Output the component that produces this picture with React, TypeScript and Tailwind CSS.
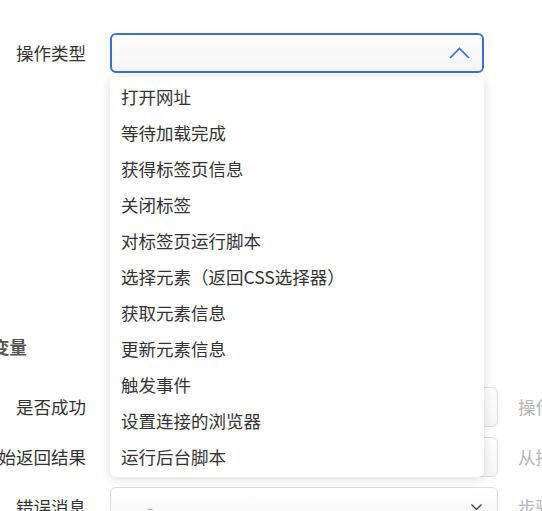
import React from 'react';

const options = [
  '打开网址',
  '等待加载完成',
  '获得标签页信息',
  '关闭标签',
  '对标签页运行脚本',
  '选择元素（返回CSS选择器）',
  '获取元素信息',
  '更新元素信息',
  '触发事件',
  '设置连接的浏览器',
  '运行后台脚本',
];

const Label: React.FC<{ text: string }> = ({ text }) => (
  <div className="w-[86px] shrink-0 flex justify-end whitespace-nowrap text-[17.5px] text-[#333]">{text}</div>
);

const App: React.FC = () => {
  return (
    <div
      className="relative w-[542px] h-[511px] overflow-hidden bg-white"
      style={{ fontFamily: '"Noto Sans CJK SC", "Noto Sans", sans-serif' }}
    >
      {/* 操作类型 */}
      <div className="mt-[33px] flex items-center gap-[24px]">
        <Label text="操作类型" />
        <div className="relative">
          <div className="w-[374px] h-[40px] rounded-[6px] border-2 border-[#3a6fd8] bg-gradient-to-b from-white to-[#f4f4f4] flex items-center justify-end pr-[12px]">
            <svg width="21" height="12" viewBox="0 0 21 12" fill="none">
              <path d="M1 11 L10.5 1.5 L20 11" stroke="#3a6fd8" strokeWidth="1.7" />
            </svg>
          </div>
          <div className="absolute left-0 top-[44px] z-10 w-[374px] rounded-[6px] bg-white py-[2px] shadow-[0_2px_12px_rgba(0,0,0,0.14)]">
            {options.map((o) => (
              <div key={o} className="h-[36px] flex items-center pl-[11px] text-[17.5px] text-[#333] whitespace-nowrap">
                {o}
              </div>
            ))}
          </div>
        </div>
      </div>

      {/* 变量 */}
      <div className="mt-[262px] -ml-[8px] h-[24px] flex items-center text-[17.5px] font-bold text-[#555]">变量</div>

      <div className="mt-[28px] flex flex-col gap-[10px]">
        <div className="flex items-center gap-[24px]">
          <Label text="是否成功" />
          <div className="w-[388px] h-[40px] shrink-0 rounded-[6px] border border-[#ddd] bg-gradient-to-b from-white to-[#f7f7f7]" />
          <div className="ml-[-4px] whitespace-nowrap text-[17.5px] text-[#b5b5b5]">操作是否成功</div>
        </div>
        <div className="flex items-center gap-[24px]">
          <Label text="原始返回结果" />
          <div className="w-[388px] h-[40px] shrink-0 rounded-[6px] border border-[#ddd] bg-gradient-to-b from-white to-[#f7f7f7]" />
          <div className="ml-[-4px] whitespace-nowrap text-[17.5px] text-[#b5b5b5]">从接口返回的结果</div>
        </div>
        <div className="flex items-center gap-[24px]">
          <Label text="错误消息" />
          <div className="w-[388px] h-[40px] shrink-0 rounded-[6px] border border-[#ddd] bg-gradient-to-b from-white to-[#f7f7f7] flex items-center justify-between pl-[36px] pr-[15px]">
            <span className="text-[17.5px] text-[#aaa]">-</span>
            <svg width="11" height="7" viewBox="0 0 11 7" fill="none">
              <path d="M0.5 0.5 L5.5 5.5 L10.5 0.5" stroke="#333" strokeWidth="1.2" />
            </svg>
          </div>
          <div className="ml-[-4px] whitespace-nowrap text-[17.5px] text-[#b5b5b5]">步骤错误消息</div>
        </div>
      </div>
    </div>
  );
};

export default App;
